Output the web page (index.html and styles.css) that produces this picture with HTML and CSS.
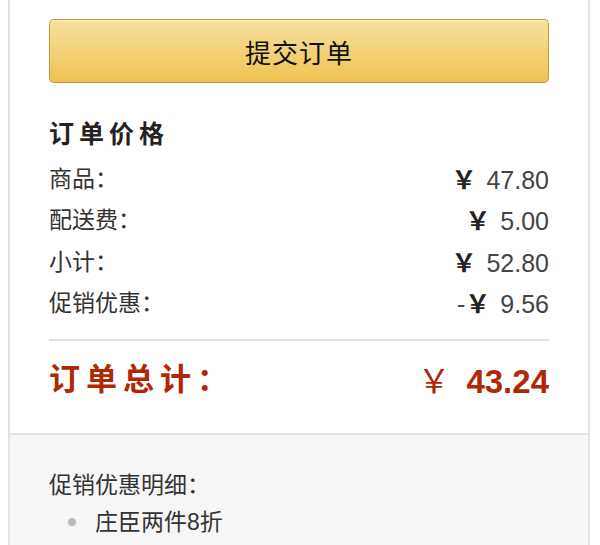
FILE: index.html
```html
<!DOCTYPE html>
<html lang="zh-CN">
<head>
    <meta charset="UTF-8">
    <meta name="viewport" content="width=device-width, initial-scale=1.0">
    <title>订单价格</title>
    <link rel="stylesheet" href="styles.css">
</head>
<body>

    <div class="order-box">
        <div class="summary">
            <button class="submit-btn">提交订单</button>

            <h3>订单价格</h3>
            <div class="row"><span>商品：</span><span class="price"><i>￥</i>47.80</span></div>
            <div class="row"><span>配送费：</span><span class="price"><i>￥</i>5.00</span></div>
            <div class="row"><span>小计：</span><span class="price"><i>￥</i>52.80</span></div>
            <div class="row"><span>促销优惠：</span><span class="price">-<i>￥</i>9.56</span></div>

            <div class="total">
                <span class="total-label">订单总计：</span>
                <span class="total-price"><i>￥</i>43.24</span>
            </div>
        </div>

        <div class="promo">
            <p>促销优惠明细：</p>
            <ul>
                <li>庄臣两件8折</li>
            </ul>
        </div>
    </div>

</body>
</html>
```

FILE: styles.css
```css
body {
    margin: 0 10px 0 8px;
    font-family: "Liberation Sans", "Noto Sans CJK SC", sans-serif;
    color: #333;
    background: #fff;
}
.order-box {
    border: 2px solid #e3e3e3;
    border-top: none;
}
.summary {
    padding: 19px 39px 28px;
}
.submit-btn {
    display: block;
    width: 100%;
    height: 64px;
    border: 1px solid #c69c3a;
    border-bottom-color: #b8902e;
    border-radius: 5px;
    background: linear-gradient(#f8e0a2, #f0c350);
    box-shadow: inset 0 1px 0 #fcefc8;
    font-family: "Noto Sans CJK SC", sans-serif;
    font-size: 26px;
    letter-spacing: 1px;
    color: #111;
    cursor: pointer;
}
h3 {
    margin: 33px 0 6px;
    font-size: 25px;
    line-height: 36px;
    letter-spacing: 5px;
    color: #222;
}
.row {
    display: flex;
    justify-content: space-between;
    align-items: center;
    height: 41.5px;
    font-size: 23px;
    line-height: 30px;
}
.price {
    font-size: 25px;
    color: #444;
}
.price i, .total-price i {
    font-style: normal;
    font-family: "Noto Sans CJK SC", sans-serif;
    font-weight: bold;
    margin-right: 10px;
    color: #222;
}
.total {
    display: flex;
    justify-content: space-between;
    align-items: center;
    margin-top: 15px;
    padding-top: 14px;
    border-top: 2px solid #e3e3e3;
    height: 50px;
    color: #b12704;
    font-weight: bold;
    line-height: 40px;
}
.total-label {
    font-size: 31px;
    letter-spacing: 6px;
}
.total-price {
    font-size: 33px;
}
.total-price i {
    color: #b12704;
    margin-right: 16px;
    font-weight: normal;
}
.promo {
    background: #f6f6f6;
    border-top: 2px solid #e3e3e3;
    padding: 32px 39px 20px;
    font-size: 23px;
    line-height: 37px;
}
.promo p {
    margin: 0;
}
.promo ul {
    margin: 0;
    padding-left: 46px;
}
.promo li {
    list-style: none;
    position: relative;
}
.promo li::before {
    content: "";
    position: absolute;
    left: -27px;
    top: 14px;
    width: 8px;
    height: 8px;
    border-radius: 50%;
    background: #bbb;
}
```
